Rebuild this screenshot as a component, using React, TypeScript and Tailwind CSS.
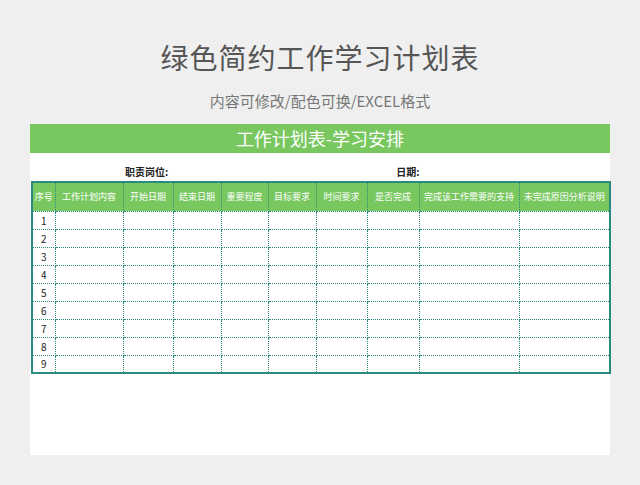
import React from 'react';

const cols = [
  { t: '序号', w: 23 },
  { t: '工作计划内容', w: 68 },
  { t: '开始日期', w: 50 },
  { t: '结束日期', w: 48 },
  { t: '重要程度', w: 47 },
  { t: '目标要求', w: 48 },
  { t: '时间要求', w: 51 },
  { t: '是否完成', w: 52 },
  { t: '完成该工作需要的支持', w: 100 },
  { t: '未完成原因分析说明', w: 91 },
];

const App = () => {
  return (
    <div className="w-[640px] h-[485px] bg-[#efefef] flex flex-col items-center" style={{ fontFamily: '"Noto Sans CJK SC", "Noto Sans", sans-serif' }}>
      <h1 className="mt-[39px] text-[28px] leading-[36px] text-[#555] tracking-[1px]">绿色简约工作学习计划表</h1>
      <p className="mt-[16px] text-[15px] leading-[20px] text-[#777]">内容可修改/配色可换/EXCEL格式</p>
      <div className="mt-[13px] w-[580px] h-[331px] bg-white">
        <div className="h-[29px] bg-[#78c85f] text-white text-[18px] leading-[29px] text-center">工作计划表-学习安排</div>
        <div className="h-[28px] flex items-end pb-[2px] text-[10px] font-bold text-[#222]">
          <span className="ml-[95px]">职责岗位:</span>
          <span className="ml-[228px]">日期:</span>
        </div>
        <table className="ml-[1px] border-collapse border-2 border-[#2a8a80] table-fixed" style={{ width: 578 }}>
          <colgroup>
            {cols.map((c, i) => <col key={i} style={{ width: c.w }} />)}
          </colgroup>
          <thead>
            <tr className="h-[29px] bg-[#78c85f]">
              {cols.map((c, i) => (
                <th key={i} className="border border-dotted border-[#2a8a80] text-white text-[9px] font-normal whitespace-nowrap p-0">{c.t}</th>
              ))}
            </tr>
          </thead>
          <tbody>
            {[1, 2, 3, 4, 5, 6, 7, 8, 9].map((n) => (
              <tr key={n} className="h-[18px]">
                {cols.map((c, i) => (
                  <td key={i} className="border border-dotted border-[#2a8a80] text-[10px] text-[#222] text-center p-0">{i === 0 ? n : ''}</td>
                ))}
              </tr>
            ))}
          </tbody>
        </table>
      </div>
    </div>
  );
};

export default App;
